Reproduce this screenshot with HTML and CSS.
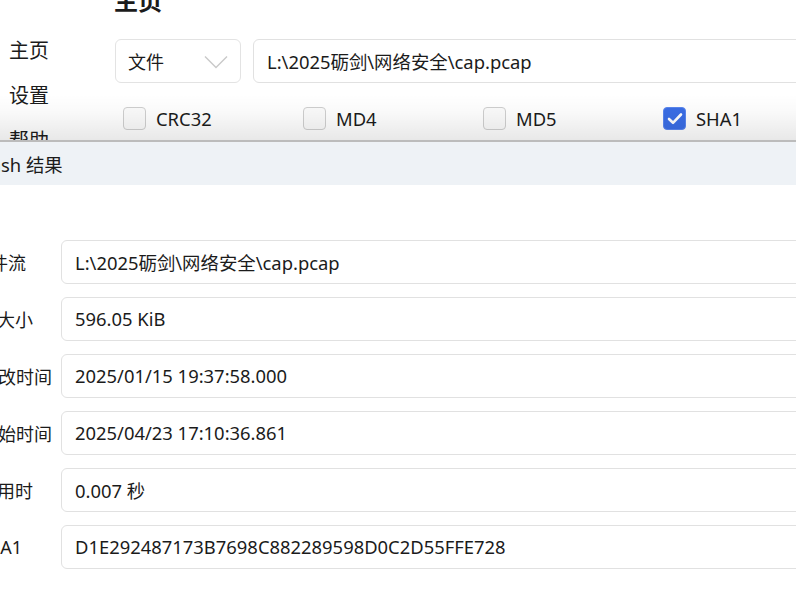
FILE: index.html
```html
<!DOCTYPE html>
<html lang="zh-CN">
<head>
<meta charset="utf-8">
<title>Hash</title>
<link rel="stylesheet" href="styles.css">
</head>
<body>
<div class="app">
  <section class="top">
    <nav class="nav">
      <div class="nav-item">主页</div>
      <div class="nav-item">设置</div>
      <div class="nav-item">帮助</div>
    </nav>
    <div class="main">
      <h1 class="title">主页</h1>
      <div class="source-row">
        <div class="combo">
          <span>文件</span>
          <svg class="chev" width="24" height="14" viewBox="0 0 24 14"><path d="M1 1.5 L12 12.5 L23 1.5" fill="none" stroke="#c9c9c9" stroke-width="1.4"/></svg>
        </div>
        <div class="textbox path-box">L:\2025砺剑\网络安全\cap.pcap</div>
      </div>
      <div class="algos">
        <label class="check"><span class="box"></span><span>CRC32</span></label>
        <label class="check"><span class="box"></span><span>MD4</span></label>
        <label class="check"><span class="box"></span><span>MD5</span></label>
        <label class="check"><span class="box on"><svg width="16" height="13" viewBox="0 0 16 13"><path d="M2 7 L6 10.8 L14 2.5" fill="none" stroke="#fff" stroke-width="2.6" stroke-linecap="round" stroke-linejoin="round"/></svg></span><span>SHA1</span></label>
      </div>
    </div>
  </section>
  <header class="band"><span class="band-title">Hash 结果</span></header>
  <section class="results">
    <div class="field"><div class="label l1">文件流</div><div class="textbox">L:\2025砺剑\网络安全\cap.pcap</div></div>
    <div class="field"><div class="label l2">文件大小</div><div class="textbox">596.05 KiB</div></div>
    <div class="field"><div class="label l3">修改时间</div><div class="textbox">2025/01/15 19:37:58.000</div></div>
    <div class="field"><div class="label l3">开始时间</div><div class="textbox">2025/04/23 17:10:36.861</div></div>
    <div class="field"><div class="label l2">计算用时</div><div class="textbox">0.007 秒</div></div>
    <div class="field"><div class="label l4">SHA1</div><div class="textbox">D1E292487173B7698C882289598D0C2D55FFE728</div></div>
  </section>
</div>
</body>
</html>
```

FILE: styles.css
```css
* { box-sizing: border-box; }
html, body { margin: 0; padding: 0; }
body {
  width: 796px;
  height: 590px;
  overflow: hidden;
  background: #ffffff;
  color: #1b1b1b;
  font-family: "Noto Sans", "Noto Sans CJK SC", sans-serif;
  font-size: 18.4px;
}
.app { width: 796px; height: 590px; overflow: hidden; }

.top {
  position: relative;
  height: 142px;
  display: grid;
  grid-template-columns: 114px 1fr;
  overflow: hidden;
  border-bottom: 2px solid #bcbcbc;
  background: #ffffff;
}
.top::after {
  content: "";
  position: absolute;
  left: 0; right: 0; bottom: 0;
  height: 46px;
  background: linear-gradient(to bottom, rgba(0,0,0,0) 0%, rgba(0,0,0,0.025) 40%, rgba(0,0,0,0.09) 100%);
  pointer-events: none;
}
.nav { padding: 27px 0 0 9px; }
.nav-item { height: 45px; line-height: 45px; font-size: 20px; font-family: "Noto Sans CJK SC", sans-serif; }

.main { display: flex; flex-direction: column; overflow: visible; }
.title {
  margin: -14px 0 0 0;
  height: 28px;
  line-height: 28px;
  font-size: 24px;
  font-weight: 700;
  font-family: "Noto Sans CJK SC", sans-serif;
}
.source-row {
  display: flex;
  gap: 12px;
  margin-top: 25px;
  margin-left: 1px;
  width: 800px;
}
.combo {
  flex: 0 0 126px;
  height: 44px;
  border: 1px solid #e3e3e3;
  border-radius: 6px;
  display: flex;
  align-items: center;
  justify-content: space-between;
  padding: 0 12px 0 12px;
  font-family: "Noto Sans CJK SC", sans-serif;
  font-size: 18px;
}
.chev { margin-top: 2px; }
.textbox {
  height: 44px;
  border: 1px solid #e1e1e1;
  border-radius: 6px;
  display: flex;
  align-items: center;
  padding-left: 13px;
  padding-bottom: 1px;
  white-space: nowrap;
  background: #fff;
}
.path-box { flex: 1 1 auto; }

.algos {
  display: grid;
  grid-template-columns: repeat(4, 180px);
  margin-top: 23px;
  margin-left: 9px;
}
.check { display: flex; align-items: center; gap: 10px; height: 24px; }
.box {
  width: 23px; height: 23px;
  border: 1px solid #cfcfcf;
  border-radius: 4px;
  background: #fbfbfb;
  display: flex; align-items: center; justify-content: center;
}
.box.on { background: #3a6de5; border-color: #5a86ee; }

.band {
  height: 43px;
  background: #eef2f6;
  display: flex;
  align-items: center;
}
.band-title { margin-left: -23px; }

.results {
  display: flex;
  flex-direction: column;
  gap: 13px;
  padding-top: 55px;
}
.field {
  display: grid;
  grid-template-columns: 61px 800px;
  align-items: center;
}
.label { white-space: nowrap; font-family: "Noto Sans CJK SC", sans-serif; font-size: 18px; }
.label.l1 { margin-left: -28px; }
.label.l2 { margin-left: -39px; }
.label.l3 { margin-left: -20px; }
.label.l4 { margin-left: -23px; font-family: "Noto Sans", sans-serif; }
```
